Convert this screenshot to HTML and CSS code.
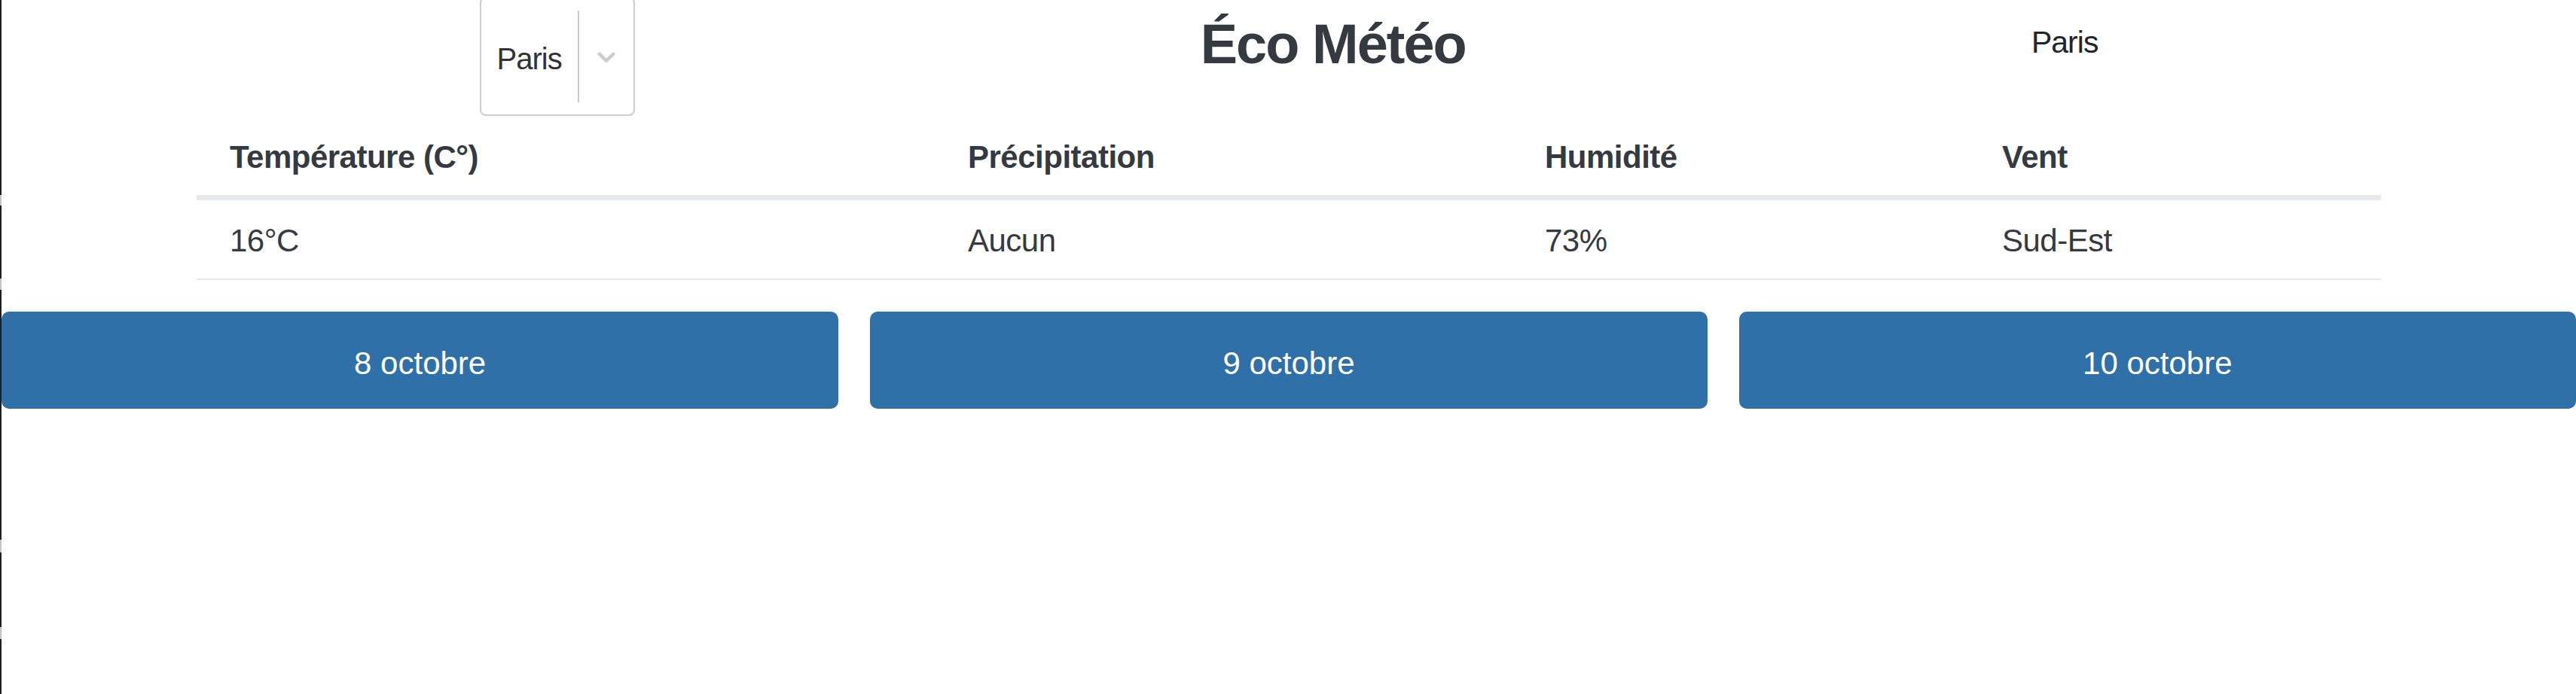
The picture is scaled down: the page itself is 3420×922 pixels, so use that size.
FILE: index.html
```html
<!DOCTYPE html>
<html lang="fr">
<head>
<meta charset="utf-8">
<title>Éco Météo</title>
<link rel="stylesheet" href="styles.css">
</head>
<body>
  <div class="container">
    <header class="top">
      <div class="select">
        <div class="select-value">Paris</div>
        <span class="select-sep"></span>
        <div class="select-ind">
          <svg class="chevron" viewBox="0 0 20 20" width="40" height="40" aria-hidden="true"><path d="M4.516 7.548c0.436-0.446 1.043-0.481 1.576 0l3.908 3.747 3.908-3.747c0.533-0.481 1.141-0.446 1.574 0 0.436 0.445 0.408 1.197 0 1.615-0.406 0.418-4.695 4.502-4.695 4.502-0.217 0.223-0.502 0.335-0.787 0.335s-0.57-0.112-0.789-0.335c0 0-4.287-4.084-4.695-4.502s-0.436-1.170 0-1.615z"/></svg>
        </div>
      </div>
      <h1 class="title">Éco Météo</h1>
      <div class="city">Paris</div>
    </header>
    <table class="weather">
      <thead>
        <tr>
          <th class="c1">Température (C°)</th>
          <th class="c2">Précipitation</th>
          <th class="c3">Humidité</th>
          <th class="c4">Vent</th>
        </tr>
      </thead>
      <tbody>
        <tr>
          <td>16°C</td>
          <td>Aucun</td>
          <td>73%</td>
          <td>Sud-Est</td>
        </tr>
      </tbody>
    </table>
  </div>
  <div class="days">
    <button class="day" type="button">8 octobre</button>
    <button class="day" type="button">9 octobre</button>
    <button class="day" type="button">10 octobre</button>
  </div>
</body>
</html>
```
FILE: styles.css
```css
html, body {
  margin: 0;
  padding: 0;
  background: #ffffff;
}

body {
  min-height: 922px;
  box-sizing: border-box;
  font-family: "Liberation Sans", Arial, sans-serif;
  border-left: 2px solid #1e1e1e;
  border-image-source: linear-gradient(to bottom,
    #1e1e1e 0, #1e1e1e 259px,
    #c4c4c4 259px, #c4c4c4 273px,
    #1e1e1e 273px, #1e1e1e 370px,
    #c4c4c4 370px, #c4c4c4 385px,
    #1e1e1e 385px, #1e1e1e 716px,
    #c4c4c4 716px, #c4c4c4 733px,
    #1e1e1e 733px, #1e1e1e 832px,
    #c4c4c4 832px, #c4c4c4 848px,
    #1e1e1e 848px, #1e1e1e 100%);
  border-image-slice: 1;
  overflow: hidden;
}

.container {
  width: 2900px;
  margin: 0 auto;
}

/* header row */
.top {
  display: flex;
  justify-content: space-around;
  align-items: flex-start;
  height: 155px;
}

.select {
  display: flex;
  align-items: stretch;
  margin-top: -4px;
  height: 158px;
  box-sizing: border-box;
  border: 2px solid #cccccc;
  border-radius: 8px;
  background: #ffffff;
}

.select-value {
  width: 128px;
  box-sizing: border-box;
  padding: 6px 0 0 21px;
  display: flex;
  align-items: center;
  font-size: 40px;
  line-height: 60px;
  letter-spacing: -1px;
  color: #333333;
}

.select-sep {
  width: 2px;
  margin: 16px 0;
  background: #cccccc;
}

.select-ind {
  display: flex;
  align-items: center;
  padding: 0 16px;
}

.chevron {
  display: block;
  fill: #cccccc;
}

.title {
  margin: 16px 0 0;
  font-size: 74px;
  line-height: 86px;
  font-weight: 700;
  letter-spacing: -2px;
  color: #343a40;
}

.city {
  margin-top: 26px;
  font-size: 41px;
  line-height: 60px;
  letter-spacing: -1px;
  color: #212529;
}

/* table */
.weather {
  width: 2900px;
  table-layout: fixed;
  border-collapse: separate;
  border-spacing: 0;
  font-size: 42px;
  letter-spacing: -0.5px;
  color: #343a40;
}

.weather th,
.weather td {
  padding: 22px 44px 18px;
  line-height: 64px;
  text-align: left;
  vertical-align: middle;
  white-space: nowrap;
}

.weather th {
  font-weight: 700;
  border-bottom: 7px solid #e7e8ec;
}

.weather td {
  font-weight: 400;
  border-bottom: 2px solid #e7e8ec;
}

/* content widths (column width minus 88px horizontal padding) */
.c1 { width: 892px; }
.c2 { width: 678px; }
.c3 { width: 519px; }
.c4 { width: 459px; }

/* day buttons */
.days {
  display: flex;
  gap: 42px;
  margin-top: 42px;
}

.day {
  flex: 1;
  height: 129px;
  box-sizing: border-box;
  padding: 9px 0 0;
  border: 0;
  border-radius: 10px;
  background: #2f70a8;
  color: #ffffff;
  font-family: "Liberation Sans", Arial, sans-serif;
  font-size: 42px;
  line-height: 60px;
  text-align: center;
}
```
